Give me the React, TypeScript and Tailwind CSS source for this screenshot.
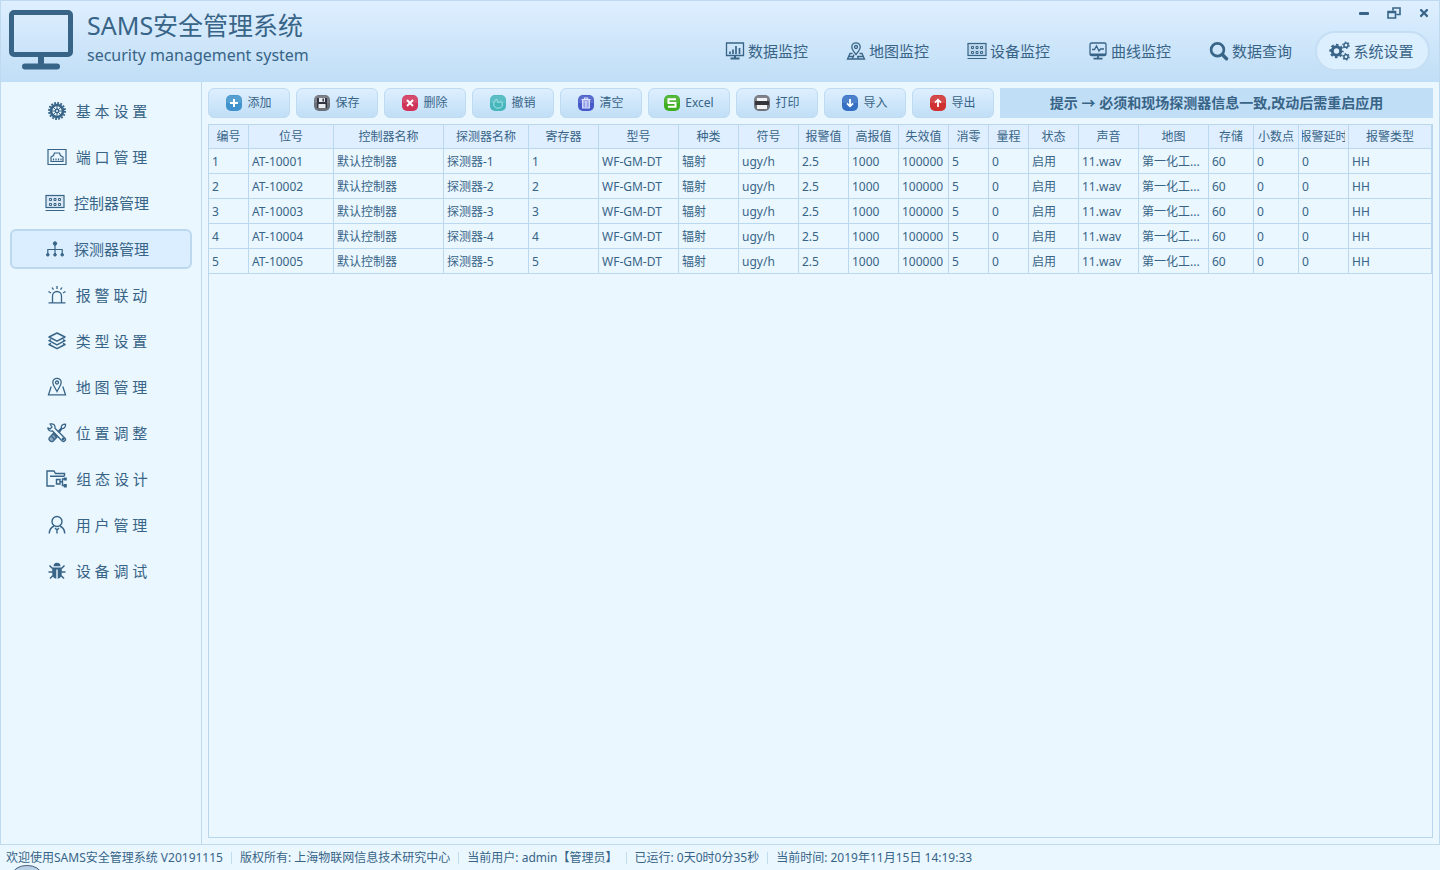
import { useState } from 'react';
import type { ReactNode } from 'react';
import { FaTimes } from 'react-icons/fa';

function ChartIcon() {
  return (
    <svg width="20" height="18" viewBox="0 0 20 18" fill="none" stroke="currentColor">
      <path d="M1.5 1h17v12.5h-17z" strokeWidth="1.3" />
      <path d="M5 9.5V12M8 7.5V12M11 4V12M14.5 6V12" strokeWidth="1.7" />
      <path d="M10 13.5V16M5.5 16.6h9" strokeWidth="2" />
    </svg>
  );
}

function MapSpotIcon() {
  return (
    <svg width="20" height="18" viewBox="0 0 20 18" fill="none" stroke="currentColor" strokeWidth="1.3">
      <path d="M10 12.5C7.5 9.5 5.8 7.4 5.8 5a4.2 4.2 0 0 1 8.4 0c0 2.4-1.7 4.5-4.2 7.5z" />
      <circle cx="10" cy="5" r="1.5" />
      <path d="M6.5 11.5H4L1.500 17h17L16 11.500h-2.500M8 12.500L6.500 17M3 14.500h4.500M11 14.500h6M11.500 14.500l1 2.500" />
    </svg>
  );
}

function DeviceIcon() {
  return (
    <svg width="20" height="18" viewBox="0 0 20 18" fill="none" stroke="currentColor">
      <rect x="1" y="1.500" width="18" height="12" strokeWidth="1.200" fill="currentColor" fillOpacity="0.100" />
      <path d="M4.500 4.500h2v2h-2zM9 4.500h2v2H9zM13.500 4.500h2v2h-2zM4.500 9.500h2v2h-2zM9 9.500h2v2H9zM13.500 9.500h2v2h-2z" />
      <path d="M.5 16.500h19" />
    </svg>
  );
}

function CurveIcon() {
  return (
    <svg width="20" height="18" viewBox="0 0 20 18" fill="none" stroke="currentColor" strokeWidth="1.300">
      <rect x="2" y="1" width="16" height="12.500" rx="1.500" />
      <path d="M4 7.500h2.500L8.500 4l2.500 5 1.500-2h3.500" />
      <path d="M2 12.500h16" strokeWidth="2" />
      <path d="M10 13.500V16M5.500 16.700h9" strokeWidth="1.800" />
    </svg>
  );
}

function SearchIcon() {
  return (
    <svg width="20" height="20" viewBox="0 0 20 20" fill="none" stroke="currentColor">
      <circle cx="8.500" cy="8.700" r="6.400" strokeWidth="2.700" />
      <path d="M13.300 13.500l4.200 4.200" strokeWidth="3.400" strokeLinecap="round" />
    </svg>
  );
}

function CogsIcon() {
  return (
    <svg width="21" height="20" viewBox="0 0 21 20" fill="none" stroke="currentColor">
      <circle cx="7.500" cy="10" r="4.200" strokeWidth="3" />
      <circle cx="7.500" cy="10" r="6.200" strokeWidth="1.900" strokeDasharray="2.600 2.270" strokeDashoffset="1.300" />
      <circle cx="17" cy="4.200" r="2.100" strokeWidth="1.500" />
      <circle cx="17" cy="4.200" r="3.200" strokeWidth="1.200" strokeDasharray="1.500 1.851" />
      <circle cx="17" cy="15.800" r="2.100" strokeWidth="1.500" />
      <circle cx="17" cy="15.800" r="3.200" strokeWidth="1.200" strokeDasharray="1.500 1.851" />
    </svg>
  );
}

function GearIcon() {
  return (
    <svg width="20" height="20" viewBox="0 0 20 20" fill="none" stroke="currentColor">
      <circle cx="10" cy="10" r="8" strokeWidth="2" strokeDasharray="1.800 1.342" />
      <circle cx="10" cy="10" r="6" strokeWidth="2.600" />
      <circle cx="10" cy="10" r="1.700" strokeWidth="1.400" />
      <path d="M10 4v4.500M10 11.500V16M4 10h4.500M11.500 10H16M5.800 5.800l3 3M11.200 11.200l3 3M14.200 5.800l-3 3M8.800 11.200l-3 3" />
    </svg>
  );
}

function PortIcon() {
  return (
    <svg width="20" height="20" viewBox="0 0 20 20" fill="none" stroke="currentColor" strokeWidth="1.200">
      <path d="M1 2.500h18v15H1z" />
      <path d="M4 14.500V10l2.500-1.500L7.500 6h5l1 2.500L16 10v4.500z" />
      <path d="M6.500 11.500v2M9 11.500v2M11.500 11.500v2M14 11.500v2" />
    </svg>
  );
}

function TreeIcon() {
  return (
    <svg width="20" height="20" viewBox="0 0 20 20" fill="currentColor" stroke="currentColor">
      <path d="M10 4v12M2.800 16v-5.500h14.400V16" fill="none" strokeWidth="1.200" />
      <circle cx="10" cy="4.500" r="1.700" />
      <circle cx="2.800" cy="15.800" r="1.300" />
      <circle cx="10" cy="15.800" r="1.300" />
      <circle cx="17.200" cy="15.800" r="1.300" />
    </svg>
  );
}

function AlarmIcon() {
  return (
    <svg width="20" height="20" viewBox="0 0 20 20" fill="none" stroke="currentColor" strokeWidth="1.300">
      <path d="M5.500 17.500V11a4.500 4.500 0 0 1 9 0v6.500M1.500 17.800h17M10 1v3M5 2.500l1.500 2.200M15 2.500l-1.500 2.200M1.500 6.500l2.500 1.500M18.500 6.500L16 8" />
    </svg>
  );
}

function LayersIcon() {
  return (
    <svg width="20" height="20" viewBox="0 0 20 20" fill="none" stroke="currentColor" strokeWidth="1.500" strokeLinejoin="round">
      <path d="M10 2l8 4-8 4.200L2 6z" />
      <path d="M4 8.700L2 9.700l8 4.200 8-4.200-2-1M4 12.500l-2 1 8 4.200 8-4.200-2-1" />
    </svg>
  );
}

function MapPinIcon() {
  return (
    <svg width="20" height="20" viewBox="0 0 20 20" fill="none" stroke="currentColor" strokeWidth="1.300">
      <path d="M10 14.500C8 10.500 5.800 8 5.800 5.500a4.200 4.200 0 0 1 8.400 0c0 2.500-2.200 5-4.200 9z" />
      <circle cx="10" cy="5.500" r="1.500" />
      <path d="M4.200 9.500L1.500 17.800h17l-2.700-8.300" />
    </svg>
  );
}

function ToolsIcon() {
  return (
    <svg width="20" height="20" viewBox="0 0 20 20" fill="none" stroke="currentColor" strokeWidth="1.300" strokeLinejoin="round">
      <path d="M3 1c3-.8 5.500 1 5 4.300l10 9.900c1.500 1.700-1 4.300-2.800 2.800L5.500 8C3 8.500.8 7 .8 4.800L3 6l2-2z" />
      <path d="M10.500 13.500l-4.500 4.700c-2 1.300-5-1.300-3.800-3.300l4.500-4.900z" fill="currentColor" fillOpacity="0.500" />
      <path d="M11 8.800L14.300 5c-.4-2.500 1.700-4 4.200-3.800.4 2.400-1.200 4.500-3.600 4.400L12 9.800" />
      <path d="M4.500 13l3 3.500M6.500 11l3 3.500" />
      <circle cx="16.200" cy="16" r=".8" />
    </svg>
  );
}

function FolderIcon() {
  return (
    <svg width="21" height="20" viewBox="0 0 21 20" fill="none" stroke="currentColor" strokeWidth="1.400">
      <path d="M8.500 17H1V2h7l1.500 2.500h9V7M4 7.300h14.500" />
      <path d="M10.500 10.500h3.500v4.500h-3.500zM14 12.700h2.500M18.500 10h-2v6.500h2" />
      <path d="M17.800 8.500h3v3h-3zM17.800 15h3v3.500h-3z" fill="currentColor" stroke="none" />
    </svg>
  );
}

function UserIcon() {
  return (
    <svg width="20" height="20" viewBox="0 0 20 20" fill="none" stroke="currentColor" strokeWidth="1.400">
      <circle cx="10" cy="6.500" r="5" />
      <path d="M2.300 18.500c0-3.500 1.700-6 4.700-7.500M17.700 18.500c0-3.500-1.700-6-4.700-7.500M8 13l2 2 2-2M10 15v3.500" />
    </svg>
  );
}

function BugIcon() {
  return (
    <svg width="20" height="20" viewBox="0 0 20 20" fill="currentColor" stroke="currentColor">
      <path d="M6.500 5.200a3.500 3.500 0 0 1 7 0z" stroke="none" />
      <path d="M5.200 6.500h9.600v6c0 3-1.800 5-4.100 5.300V8.500H9.300v9.300c-2.300-.3-4.100-2.300-4.100-5.300z" stroke="none" />
      <path d="M5.500 7.500l-3-3M14.500 7.500l3-3M5.500 11h-4M14.500 11h4M6 14.500l-3 3M14 14.500l3 3" fill="none" strokeWidth="1.500" />
    </svg>
  );
}

function BadgeIcon({ color, children }: { color: string; children: ReactNode }) {
  return (
    <svg width="16" height="16" viewBox="0 0 16 16" fill="none" stroke="#fff" strokeWidth="2">
      <rect width="16" height="16" rx="5" fill={color} stroke="none" />
      <path d="M5 .5h6A4.500 4.500 0 0 1 15.500 5v3H.5V5A4.500 4.500 0 0 1 5 .5z" fill="#fff" fillOpacity="0.120" stroke="none" />
      {children}
    </svg>
  );
}

const navItems = [
  { label: '数据监控', icon: <ChartIcon /> },
  { label: '地图监控', icon: <MapSpotIcon /> },
  { label: '设备监控', icon: <DeviceIcon /> },
  { label: '曲线监控', icon: <CurveIcon /> },
  { label: '数据查询', icon: <SearchIcon /> },
  { label: '系统设置', icon: <CogsIcon /> },
];

const sideItems = [
  { label: '基 本 设 置', icon: <GearIcon /> },
  { label: '端 口 管 理', icon: <PortIcon /> },
  { label: '控制器管理', icon: <DeviceIcon /> },
  { label: '探测器管理', icon: <TreeIcon /> },
  { label: '报 警 联 动', icon: <AlarmIcon /> },
  { label: '类 型 设 置', icon: <LayersIcon /> },
  { label: '地 图 管 理', icon: <MapPinIcon /> },
  { label: '位 置 调 整', icon: <ToolsIcon /> },
  { label: '组 态 设 计', icon: <FolderIcon /> },
  { label: '用 户 管 理', icon: <UserIcon /> },
  { label: '设 备 调 试', icon: <BugIcon /> },
];

const tools = [
  { label: '添加', color: '#3f92cb', glyph: <path d="M8 4v8M4 8h8" /> },
  {
    label: '保存',
    color: '#6b6f78',
    glyph: (
      <>
        <path d="M3 3h10v10H3z" fill="#2f3440" stroke="none" />
        <path d="M5 3h6v4H5zM4.500 9h7v4h-7z" fill="#e8ebef" stroke="none" />
        <path d="M9.200 3.500v3" stroke="#2f3440" strokeWidth="1.500" />
      </>
    ),
  },
  { label: '删除', color: '#cf3358', glyph: <path d="M5 5l6 6M11 5l-6 6" /> },
  {
    label: '撤销',
    color: '#46b6bd',
    glyph: <path d="M6.500 4L3.800 7v4l2.500 2h4l2-2V7.500L10 6.500 8.500 8 6.500 4z" stroke="#a5e3e3" strokeWidth="1" />,
  },
  {
    label: '清空',
    color: '#4458c8',
    glyph: (
      <>
        <path d="M4.500 5h7v8h-7z" fill="#dfe4ff" fillOpacity="0.500" stroke="none" />
        <path d="M3.500 4.500h9M6.500 4V3h3v1M4.700 5v8h6.600V5M8 6v6" stroke="#dfe4ff" strokeWidth="1.200" />
      </>
    ),
  },
  { label: 'Excel', color: '#3fae20', glyph: <path d="M12 4.200H4.500V8h7v3.800H4" /> },
  {
    label: '打印',
    color: '#6f7279',
    glyph: (
      <>
        <path d="M3 3h10v3H3zM3 10h10v4H3z" fill="#f1f2f4" stroke="none" />
        <path d="M1 6h14v4H1z" fill="#33353b" stroke="none" />
      </>
    ),
  },
  { label: '导入', color: '#346fc4', glyph: <path d="M8 4v7M5 8.300l3 3 3-3" strokeWidth="1.800" /> },
  { label: '导出', color: '#cf3030', glyph: <path d="M8 12V5M5 7.700l3-3 3 3" strokeWidth="1.800" /> },
];

const columns = [
  { title: '编号', width: 'w-[40px]' },
  { title: '位号', width: 'w-[85px]' },
  { title: '控制器名称', width: 'w-[110px]' },
  { title: '探测器名称', width: 'w-[85px]' },
  { title: '寄存器', width: 'w-[70px]' },
  { title: '型号', width: 'w-[80px]' },
  { title: '种类', width: 'w-[60px]' },
  { title: '符号', width: 'w-[60px]' },
  { title: '报警值', width: 'w-[50px]' },
  { title: '高报值', width: 'w-[50px]' },
  { title: '失效值', width: 'w-[50px]' },
  { title: '消零', width: 'w-[40px]' },
  { title: '量程', width: 'w-[40px]' },
  { title: '状态', width: 'w-[50px]' },
  { title: '声音', width: 'w-[60px]' },
  { title: '地图', width: 'w-[70px]' },
  { title: '存储', width: 'w-[45px]' },
  { title: '小数点', width: 'w-[45px]' },
  { title: '报警延时', width: 'w-[50px]' },
  { title: '报警类型', width: '' },
];

const rows = [1, 2, 3, 4, 5].map((n) => [
  `${n}`, `AT-1000${n}`, '默认控制器', `探测器-${n}`, `${n}`, 'WF-GM-DT', '辐射', 'ugy/h', '2.5', '1000',
  '100000', '5', '0', '启用', '11.wav', '第一化工...', '60', '0', '0', 'HH',
]);

const statusItems = [
  '欢迎使用SAMS安全管理系统 V20191115',
  '版权所有: 上海物联网信息技术研究中心',
  '当前用户: admin【管理员】',
  '已运行: 0天0时0分35秒',
  '当前时间: 2019年11月15日 14:19:33',
];

function Header() {
  const [active, setActive] = useState('系统设置');

  return (
    <header className="flex h-[81px] justify-between bg-linear-to-b from-[#deefff] to-[#c0def6]">
      <div className="flex gap-3.5 pl-2 pt-2">
        <svg width="64" height="62" viewBox="0 0 64 62" fill="none" stroke="currentColor">
          <rect x="2.500" y="3.500" width="59" height="42" rx="2.500" strokeWidth="5" />
          <path d="M32 46v10" strokeWidth="6" />
          <path d="M16 57.500h32" strokeWidth="6" strokeLinecap="round" />
        </svg>
        <div>
          <h1 className="text-[25px] leading-8">SAMS安全管理系统</h1>
          <p className="text-base leading-7">security management system</p>
        </div>
      </div>
      <div className="flex flex-col items-end">
        <div className="flex h-6 items-center gap-4 pr-2">
          <button aria-label="最小化" className="flex size-3.5 items-center justify-center">
            <svg width="10" height="3" viewBox="0 0 10 3" fill="currentColor"><rect width="10" height="3" rx="1" /></svg>
          </button>
          <button aria-label="还原" className="flex size-3.5 items-center justify-center">
            <svg width="14" height="12" viewBox="0 0 14 12" fill="none" stroke="currentColor" strokeWidth="1.600">
              <path d="M6 3.500V1h7v6.500H9.500M1 4.500h7.500V11H1zM1 5.500h7.500" />
            </svg>
          </button>
          <button aria-label="关闭" className="flex size-3.5 items-center justify-center">
            <FaTimes size={12} />
          </button>
        </div>
        <nav className="flex gap-1.5 pr-[9px] pt-1.5">
          {navItems.map((item) => (
            <button
              key={item.label}
              onClick={() => setActive(item.label)}
              className={`flex h-10 w-[115px] items-center justify-center gap-[3px] rounded-full border-2 pr-0.5 text-[15px] ${
                active === item.label ? 'border-[#c5def3] bg-[#dceffe]' : 'border-transparent'
              }`}
            >
              {item.icon}
              {item.label}
            </button>
          ))}
        </nav>
      </div>
    </header>
  );
}

function Sidebar() {
  const [active, setActive] = useState('探测器管理');

  return (
    <aside className="flex w-[201px] shrink-0 flex-col gap-1.5 border-r border-[#bfdaee] px-[9px] pt-[9px]">
      {sideItems.map((item) => (
        <button
          key={item.label}
          onClick={() => setActive(item.label)}
          className={`flex h-10 items-center justify-center gap-[9px] rounded-md border-2 pr-2 text-[15px] ${
            active === item.label ? 'border-[#bcd8ee] bg-[#dbeeff]' : 'border-transparent'
          }`}
        >
          {item.icon}
          {item.label}
        </button>
      ))}
    </aside>
  );
}

function DetectorTable() {
  return (
    <div className="flex-1 border border-[#bad6ea]">
      <table className="w-full table-fixed border-separate border-spacing-0 text-xs">
        <thead>
          <tr className="h-6 bg-[#dfefff]">
            {columns.map((col) => (
              <th key={col.title} className={`border-b border-r border-[#bad8ef] px-[3px] py-0 font-normal ${col.width}`}>
                <span className="flex justify-center overflow-hidden whitespace-nowrap">{col.title}</span>
              </th>
            ))}
          </tr>
        </thead>
        <tbody>
          {rows.map((row) => (
            <tr key={row[0]} className="h-[25px]">
              {row.map((cell, i) => (
                <td key={i} className="overflow-hidden whitespace-nowrap border-b border-r border-[#bad8ef] pb-0 pl-[3px] pt-0.5">
                  {cell}
                </td>
              ))}
            </tr>
          ))}
        </tbody>
      </table>
    </div>
  );
}

export default function App() {
  return (
    <div className="relative flex min-h-screen flex-col overflow-hidden bg-[#eaf7ff] font-['Noto_Sans','Noto_Sans_CJK_SC',sans-serif] text-[#386487]">
      <div className="flex flex-1 flex-col border border-[#bfdaee]">
        <Header />
        <div className="flex flex-1">
          <Sidebar />
          <main className="flex min-w-0 flex-1 flex-col gap-1.5 p-1.5">
            <div className="flex gap-1.5">
              {tools.map((tool) => (
                <button
                  key={tool.label}
                  className="flex h-[30px] w-[82px] shrink-0 items-center justify-center gap-[5px] rounded-md border border-[#c0dbf1] bg-linear-to-b from-[#deefff] to-[#c0def6] text-xs"
                >
                  <BadgeIcon color={tool.color}>{tool.glyph}</BadgeIcon>
                  {tool.label}
                </button>
              ))}
              <div className="flex flex-1 items-center justify-center bg-[#c0def6] text-sm font-bold">
                提示 → 必须和现场探测器信息一致,改动后需重启应用
              </div>
            </div>
            <DetectorTable />
          </main>
        </div>
      </div>
      <footer className="flex h-[25px] items-center text-xs">
        {statusItems.map((item) => (
          <span key={item} className="border-r border-[#c3dcee] px-2 leading-3 first:pl-1.5 last:border-r-0">
            {item}
          </span>
        ))}
      </footer>
      <svg className="absolute bottom-0 left-3" width="30" height="5" viewBox="0 0 30 5">
        <ellipse cx="15" cy="9" rx="14" ry="8.500" fill="#b9d0e6" stroke="#4a5f7a" />
      </svg>
    </div>
  );
}
